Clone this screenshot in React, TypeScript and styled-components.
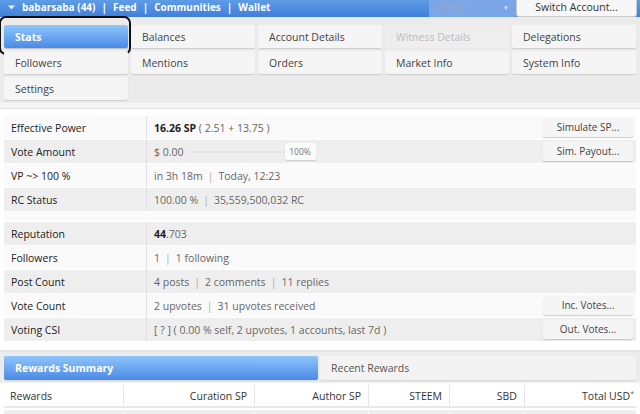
import React from 'react';
import styled, { createGlobalStyle, css } from 'styled-components';

const GlobalStyle = createGlobalStyle`
  html, body {
    margin: 0;
    padding: 0;
    background: #ffffff;
    font-family: "Open Sans", "Noto Sans", sans-serif;
    font-size: 10.5px;
    color: #333;
  }
  * { box-sizing: border-box; }
`;

interface StatRow {
  label: string;
  value: React.ReactNode;
  button?: string;
}

const Sep = () => <Pipe>|</Pipe>;

const topRows: StatRow[] = [
  { label: 'Effective Power', value: <><b>16.26 SP</b>&nbsp;( 2.51 + 13.75 )</>, button: 'Simulate SP...' },
  { label: 'Vote Amount', value: <VoteAmount />, button: 'Sim. Payout...' },
  { label: 'VP ~> 100 %', value: <>in 3h 18m <Sep /> Today, 12:23</> },
  { label: 'RC Status', value: <>100.00 % <Sep /> 35,559,500,032 RC</> },
];

const bottomRows: StatRow[] = [
  { label: 'Reputation', value: <><b>44</b>.703</> },
  { label: 'Followers', value: <>1 <Sep /> 1 following</> },
  { label: 'Post Count', value: <>4 posts <Sep /> 2 comments <Sep /> 11 replies</> },
  { label: 'Vote Count', value: <>2 upvotes <Sep /> 31 upvotes received</>, button: 'Inc. Votes...' },
  { label: 'Voting CSI', value: <>[ ? ] ( 0.00 % self, 2 upvotes, 1 accounts, last 7d )</>, button: 'Out. Votes...' },
];

const tabs = [
  'Stats', 'Balances', 'Account Details', 'Witness Details', 'Delegations',
  'Followers', 'Mentions', 'Orders', 'Market Info', 'System Info',
  'Settings',
];

function VoteAmount() {
  return (
    <SliderWrap>
      <span>$ 0.00</span>
      <Track />
      <Knob>100%</Knob>
    </SliderWrap>
  );
}

function StatsTable({ rows, startShade }: { rows: StatRow[]; startShade: boolean }) {
  return (
    <>
      {rows.map((r, i) => (
        <Row key={r.label} $shade={(i % 2 === 0) === startShade}>
          <Label>{r.label}</Label>
          <Value>{r.value}</Value>
          <Actions>{r.button && <SmallButton>{r.button}</SmallButton>}</Actions>
        </Row>
      ))}
    </>
  );
}

export default function App() {
  return (
    <>
      <GlobalStyle />
      <Page>
        <TopBar>
          <Nav>
            <Caret viewBox="0 0 10 6"><path d="M0 0 H10 L5 6 Z" fill="#e8f0fb" /></Caret>
            <span>babarsaba (44)</span><NavSep>|</NavSep>
            <span>Feed</span><NavSep>|</NavSep>
            <span>Communities</span><NavSep>|</NavSep>
            <span>Wallet</span>
          </Nav>
          <ChainSelect>
            <span>STEEM</span>
            <SelectArrow>▾</SelectArrow>
          </ChainSelect>
          <SwitchButton>Switch Account...</SwitchButton>
        </TopBar>

        <TabPanel>
          {tabs.map((t) => (
            <Tab key={t} $active={t === 'Stats'} $disabled={t === 'Witness Details'}>
              {t}
            </Tab>
          ))}
        </TabPanel>

        <StatsPanel>
          <StatsTable rows={topRows} startShade={false} />
          <Spacer />
          <StatsTable rows={bottomRows} startShade={true} />
        </StatsPanel>

        <RewardTabs>
          <RewardTab $active>Rewards Summary</RewardTab>
          <RewardTab>Recent Rewards</RewardTab>
        </RewardTabs>

        <RewardTable>
          <HeadCell $left>Rewards</HeadCell>
          <HeadCell>Curation SP</HeadCell>
          <HeadCell>Author SP</HeadCell>
          <HeadCell>STEEM</HeadCell>
          <HeadCell>SBD</HeadCell>
          <HeadCell $last>Total USD<sup>*</sup></HeadCell>
          <BodyCell $left />
          <BodyCell />
          <BodyCell />
          <BodyCell />
          <BodyCell />
          <BodyCell $last />
        </RewardTable>
      </Page>
    </>
  );
}

const Page = styled.div`
  width: 640px;
  height: 414px;
  overflow: hidden;
  background: #f4f4f4;
`;

const TopBar = styled.div`
  display: flex;
  align-items: stretch;
  height: 17px;
  background: linear-gradient(#5f9ce6, #3f7fda);
  padding-left: 8px;
`;

const Nav = styled.div`
  flex: 1;
  display: flex;
  align-items: center;
  color: #fff;
  font-weight: bold;
  font-size: 10px;
  white-space: nowrap;
  margin-top: -3px;
`;

const Caret = styled.svg`
  width: 7px;
  height: 5px;
  margin-right: 7px;
`;

const NavSep = styled.span`
  margin: 0 6px;
`;

const ChainSelect = styled.div`
  width: 87px;
  display: flex;
  align-items: center;
  justify-content: space-between;
  padding: 0 8px 0 5px;
  margin-top: -2px;
  height: 19px;
  background: #7aa6e7;
  color: #93a8cb;
  font-size: 10.5px;
`;

const SelectArrow = styled.span`
  font-size: 7px;
  color: #d8e4f6;
`;

const SwitchButton = styled.div`
  width: 121px;
  margin-right: 3px;
  margin-top: -2px;
  height: 19px;
  padding-top: 2px;
  background: #f7f7f7;
  border: 1px solid #c8c8c8;
  border-top: none;
  border-radius: 0 0 3px 3px;
  text-align: center;
  color: #333;
  font-size: 10.5px;
`;

const TabPanel = styled.div`
  display: grid;
  grid-template-columns: repeat(5, 124px);
  grid-auto-rows: 23px;
  gap: 3px;
  padding: 8px 4px 3px 4px;
  background: #ebebeb;
  border-bottom: 1px solid #f8f8f8;
`;

const Tab = styled.div<{ $active?: boolean; $disabled?: boolean }>`
  position: relative;
  padding-left: 11px;
  line-height: 24px;
  font-size: 10.5px;
  color: #444;
  background: #f5f5f5;
  border-radius: 2px;
  box-shadow: 0 1px 1px rgba(0, 0, 0, 0.13);
  white-space: nowrap;

  ${(p) => p.$disabled && css`
    color: #bbbbbb;
    background: #eeeeee;
    box-shadow: none;
  `}

  ${(p) => p.$active && css`
    color: #fff;
    font-weight: bold;
    background: linear-gradient(#8fc6fb, #4a8ae6);
    box-shadow: 0 1px 1px rgba(0, 0, 0, 0.2);
    &::after {
      content: '';
      position: absolute;
      top: -9px;
      left: -5px;
      right: -3px;
      bottom: -7px;
      border: 2px solid #111;
      border-radius: 7px;
    }
  `}
`;

const StatsPanel = styled.div`
  margin-top: 4px;
  border-top: 1px solid #e2e2e2;
  background: #ffffff;
  padding: 7px 4px 8px 4px;
  border-bottom: 2px solid #e4e4e4;
`;

const Row = styled.div<{ $shade: boolean }>`
  display: grid;
  grid-template-columns: 143px 1fr auto;
  height: 23px;
  margin-bottom: 1px;
  background: ${(p) => (p.$shade ? '#eeeeee' : '#fafafa')};
  font-size: 10.5px;
`;

const Label = styled.div`
  display: flex;
  align-items: center;
  padding-left: 7px;
  color: #222;
  border-right: 1px solid #e0e0e0;
`;

const Value = styled.div`
  display: flex;
  align-items: center;
  padding-left: 7px;
  color: #666;
  white-space: nowrap;
  b {
    color: #222;
    font-weight: bold;
  }
`;

const Pipe = styled.span`
  color: #aaa;
  margin: 0 5px;
`;

const Actions = styled.div`
  display: flex;
  align-items: center;
  padding-right: 3px;
`;

const SmallButton = styled.div`
  width: 90px;
  height: 19px;
  line-height: 18px;
  text-align: center;
  font-size: 10px;
  color: #444;
  background: #f5f5f5;
  border-radius: 2px;
  box-shadow: 0 1px 1px rgba(0, 0, 0, 0.18);
`;

const Spacer = styled.div`
  height: 9px;
  background: #fafafa;
  margin-bottom: 1px;
`;

const SliderWrap = styled.div`
  display: flex;
  align-items: center;
`;

const Track = styled.div`
  width: 94px;
  margin-left: 7px;
  border-top: 2px dotted #dddddd;
`;

const Knob = styled.div`
  width: 31px;
  height: 17px;
  line-height: 17px;
  text-align: center;
  font-size: 8.5px;
  color: #777;
  background: #fbfbfb;
  border-radius: 2px;
  box-shadow: 0 1px 1px rgba(0, 0, 0, 0.15);
`;

const RewardTabs = styled.div`
  display: grid;
  grid-template-columns: 314px 316px;
  gap: 2px;
  padding: 4px 4px 3px 4px;
  background: #ececec;
`;

const RewardTab = styled.div<{ $active?: boolean }>`
  height: 24px;
  line-height: 24px;
  padding-left: 11px;
  font-size: 10.5px;
  color: #555;
  background: #f3f3f3;
  border-radius: 2px;
  box-shadow: 0 1px 1px rgba(0, 0, 0, 0.1);
  ${(p) => p.$active && css`
    color: #fff;
    font-weight: bold;
    background: linear-gradient(#8fc6fb, #4a8ae6);
  `}
`;

const RewardTable = styled.div`
  display: grid;
  grid-template-columns: 120px 131px 114px 81px 75px 111px;
  grid-auto-rows: 23px;
  padding: 2px 4px 0 4px;
  background: #ffffff;
  row-gap: 2px;
`;

const HeadCell = styled.div<{ $left?: boolean; $last?: boolean }>`
  display: flex;
  align-items: center;
  justify-content: ${(p) => (p.$left ? 'flex-start' : 'flex-end')};
  padding: 0 7px 0 6px;
  padding-right: ${(p) => (p.$last ? '2px' : '7px')};
  font-size: 10.5px;
  color: #333;
  border-right: ${(p) => (p.$last ? 'none' : '1px solid #e6e6e6')};
  border-bottom: 2px solid #e8e8e8;
  sup {
    font-size: 7px;
    align-self: flex-start;
    margin-top: 4px;
    color: #666;
  }
`;

const BodyCell = styled.div<{ $left?: boolean; $last?: boolean }>`
  display: flex;
  align-items: center;
  padding-left: 6px;
  background: #eeeeee;
  color: #666;
  font-size: 10.5px;
  border-right: ${(p) => (p.$last ? 'none' : '1px solid #fafafa')};
`;
